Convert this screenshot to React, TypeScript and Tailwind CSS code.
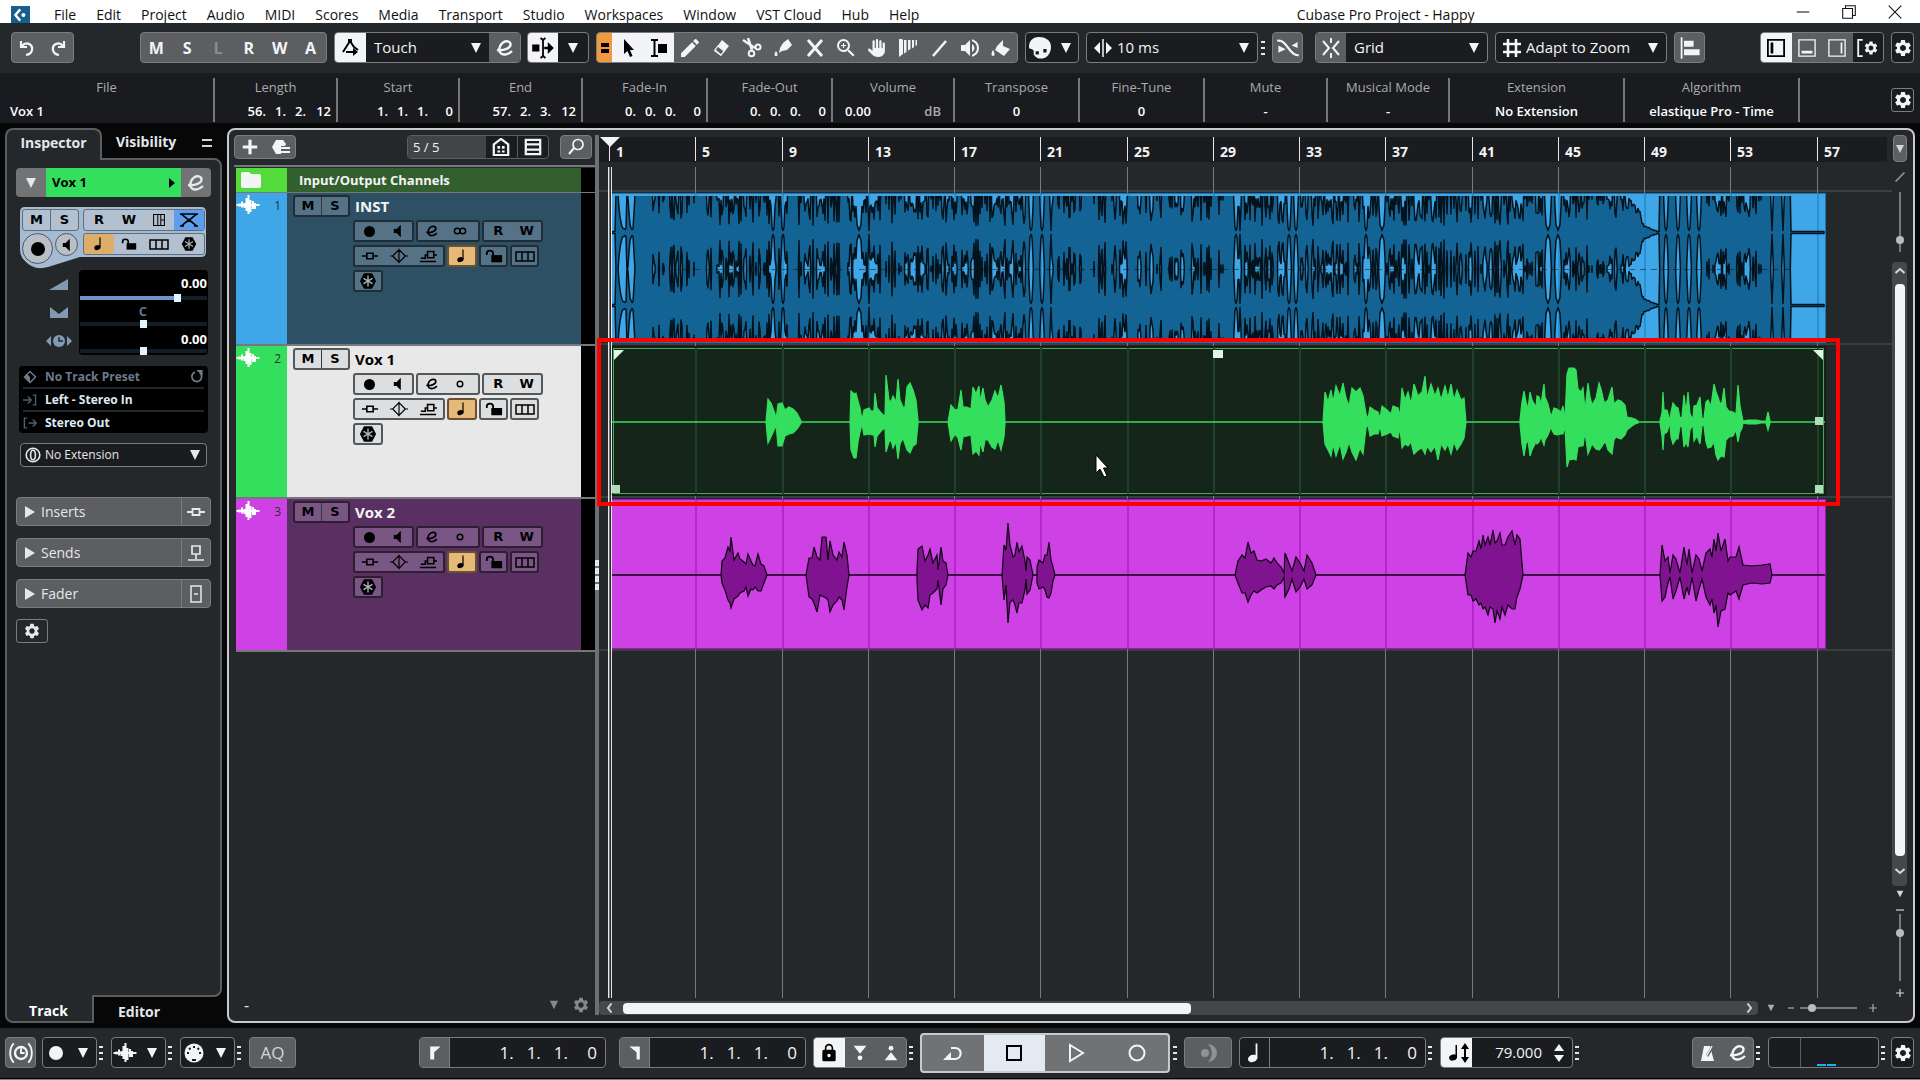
import type { ReactNode } from "react";
import clsx from "clsx";
import { FaHand } from "react-icons/fa6";
import {
  MdEdit,
  MdFolder,
  MdLock,
  MdSettings,
  MdVolumeUp,
  MdZoomIn,
} from "react-icons/md";

/* ---------- icons ---------- */

type IconProps = { className?: string };

const Svg = ({
  children,
  className = "size-5",
  box = "0 0 20 20",
  fill = "none",
}: {
  children: ReactNode;
  className?: string;
  box?: string;
  fill?: string;
}) => (
  <svg viewBox={box} className={clsx("shrink-0", className)} fill={fill} stroke={fill === "none" ? "currentColor" : "none"} strokeWidth="2" aria-hidden="true">
    {children}
  </svg>
);

const Triangle = ({ className = "h-3 w-2.5" }: IconProps) => (
  <Svg box="0 0 10 12" fill="currentColor" className={className}>
    <path d="M0 1h10L5 11z" />
  </Svg>
);

const EditIcon = ({ className = "size-5" }: IconProps) => (
  <Svg className={className}>
    <path d="M2 12C9 13 16 10 15.500 6c-.4-3-4.500-3.500-7.500-1.500C5 6.500 3 12 5.500 15c2.500 2.800 8 1.500 11.500-2" strokeWidth="2.400" />
  </Svg>
);

const WaveIcon = ({ className = "size-6" }: IconProps) => (
  <Svg box="0 0 24 20" className={className}>
    <path d="M.5 10h23M3.500 8.500v3M6 6.500v6M8.500 8v5M10.500 3v13M12.500 0v19M14.500 5v12M17 6v8M19 8v6M21 9v2" />
  </Svg>
);

const NoteIcon = ({ className = "size-5" }: IconProps) => (
  <Svg className={className} fill="currentColor">
    <ellipse cx="8" cy="14.500" rx="4" ry="3" transform="rotate(-20 8 14.500)" />
    <path d="M10.500 2H12v12.500h-1.500z" />
  </Svg>
);

const SpeakerIcon = ({ className = "size-4" }: IconProps) => (
  <Svg className={className} fill="currentColor">
    <path d="M4 7h4l6-6v18l-6-6H4z" />
  </Svg>
);

const UnlockIcon = ({ className = "size-5" }: IconProps) => (
  <Svg className={className}>
    <path d="M2 9V7c0-4 7-4 7 0v3" strokeWidth="2" />
    <path d="M7 9h12v8H7z" fill="currentColor" stroke="none" />
  </Svg>
);

const LanesIcon = ({ className = "size-5" }: IconProps) => (
  <Svg className={className}>
    <path d="M1 6h18v9H1zM7 6v9M13 6v9" strokeWidth="1.500" />
  </Svg>
);

const FreezeIcon = ({ className = "size-5" }: IconProps) => (
  <Svg className={className}>
    <path d="M5.500 1.500h9L19 10l-4.500 8.500h-9L1 10z" fill="currentColor" stroke="none" />
    <path d="M10 4v12M5 7l10 6M15 7L5 13" stroke="#aeb5bb" strokeWidth="1.500" />
  </Svg>
);

const InsertIcon = ({ className = "size-5" }: IconProps) => (
  <Svg className={className}>
    <path d="M1 10h5M14 10h5M6.500 7h7v6h-7z" strokeWidth="1.800" />
  </Svg>
);

const EqIcon = ({ className = "size-5" }: IconProps) => (
  <Svg className={className}>
    <path d="M0 10h3l7-7 7 7-7 7-7-7M17 10h3M10 2v16" strokeWidth="1.300" />
  </Svg>
);

const SendIcon = ({ className = "size-5" }: IconProps) => (
  <Svg className={className}>
    <path d="M1 16h18M2 12.500h5V9h2M9.500 5h7v7h-7zM16 9h4" strokeWidth="1.700" />
  </Svg>
);

const Gear = ({ className = "size-5" }: IconProps) => <MdSettings className={clsx("shrink-0", className)} />;

const Dots = ({ className }: IconProps) => (
  <span className={clsx("flex w-1 shrink-0 flex-col gap-1", className)} aria-hidden="true">
    <i className="h-0.5 bg-gray-200" />
    <i className="h-0.5 bg-gray-200" />
    <i className="h-0.5 bg-gray-200" />
  </span>
);

/* ---------- small controls ---------- */

const Cell = ({ label, children, className }: { label: string; children?: ReactNode; className?: string }) => (
  <button type="button" aria-label={label} className={clsx("flex h-full min-w-0 flex-1 items-center justify-center", className)}>
    {children}
  </button>
);

const Group = ({ children, className }: { children: ReactNode; className?: string }) => (
  <div className={clsx("flex h-[31px] shrink-0 items-center overflow-hidden rounded-[4px] border border-[#7a7c7f]", className)}>
    {children}
  </div>
);

const Picker = ({ label, value, className }: { label: string; value: string; className?: string }) => (
  <label className={clsx("flex h-full min-w-0 flex-1 items-center", className)}>
    <select aria-label={label} defaultValue={value} className="min-w-0 flex-1 appearance-none bg-transparent outline-none">
      <option>{value}</option>
    </select>
    <Triangle className="pointer-events-none h-3 w-2.5" />
  </label>
);

const Position = ({ parts, className }: { parts: string[]; className?: string }) => (
  <span className={clsx("flex justify-end", className)}>
    {parts.map((p, i) => (
      <span key={i} className={i === parts.length - 1 ? "w-4 text-right" : undefined}>
        {p}
      </span>
    ))}
  </span>
);

/* ---------- header bars ---------- */

const menus = ["File", "Edit", "Project", "Audio", "MIDI", "Scores", "Media", "Transport", "Studio", "Workspaces", "Window", "VST Cloud", "Hub", "Help"];

const MenuBar = () => (
  <header className="flex h-[23px] shrink-0 items-center bg-white pl-[11px] pt-1.5 text-[14px] leading-[17px] text-[#111]">
    <span className="flex h-[17px] w-[19px] items-center justify-center bg-[#17608c] text-white">
      <Svg className="size-4">
        <path d="M9 3l-6 7 6 7" strokeWidth="3" />
        <circle cx="13" cy="10" r="2.500" fill="currentColor" stroke="none" />
      </Svg>
    </span>
    <nav className="ml-6 flex gap-5">
      {menus.map((m) => (
        <button key={m} type="button">
          {m}
        </button>
      ))}
    </nav>
    <h1 className="flex-1 pl-14 text-center">Cubase Pro Project - Happy</h1>
    <div className="mb-1.5 mr-[18px] flex gap-8">
      <button type="button" aria-label="Minimize">
        <Svg className="size-3.5"><path d="M1 10h18" strokeWidth="1.500" /></Svg>
      </button>
      <button type="button" aria-label="Restore">
        <Svg className="size-3.5"><path d="M1 5h14v14H1zM5 5V1h14v14h-4" strokeWidth="1.500" /></Svg>
      </button>
      <button type="button" aria-label="Close">
        <Svg className="size-3.5"><path d="M1 1l18 18M19 1L1 19" strokeWidth="1.500" /></Svg>
      </button>
    </div>
  </header>
);

const tools: [string, ReactNode][] = [
  ["Draw", <MdEdit className="size-6" />],
  ["Erase", <Svg className="size-5"><path d="M11 2l7 6-8 10-7-5z" fill="currentColor" stroke="none" /><path d="M4 12l6 5 3-4-6-5z" fill="#5d5e61" strokeWidth="1.200" /></Svg>],
  ["Split", <Svg className="size-5"><path d="M1 2l12 8M6 0l4 12" strokeWidth="2.500" /><circle cx="16" cy="9" r="2.500" /><circle cx="9.500" cy="15.500" r="2.800" /></Svg>],
  ["Glue", <Svg className="size-5"><path d="M10 5l5-4 4 6-5 5-5 1-3 2 1-5z" fill="currentColor" stroke="none" /><path d="M3 13c2 3 2 5 0 5s-2-2 0-5z" fill="currentColor" stroke="none" /></Svg>],
  ["Mute", <Svg className="size-5"><path d="M3 2l14 16M17 2L3 18" strokeWidth="3" /></Svg>],
  ["Zoom", <MdZoomIn className="size-6" />],
  ["Hand", <FaHand className="size-[18px]" />],
  ["Warp", <Svg className="size-5"><path d="M1 1h3l1 1v14l-4 3zM6 2h2.500v12L6 15.500zM10 2h2.500v9L10 12.500zM14 2h2v7l-2 1.500zM17.500 2H19v5l-1.500 1z" fill="currentColor" stroke="none" /></Svg>],
  ["Line", <Svg className="size-5"><path d="M4 18L17 3" strokeWidth="2.500" /></Svg>],
  ["Play", <MdVolumeUp className="size-6" />],
  ["Color", <Svg className="size-5"><path d="M6 8l6-6v6l7 3-6 7-9-6z" fill="currentColor" stroke="none" /><path d="M2 12c2 3 2 6 0 6s-2-3 0-6z" fill="currentColor" stroke="none" /></Svg>],
];

const Toolbar = () => (
  <div className="flex h-[50px] shrink-0 items-center gap-[7px] bg-[#24282b] pb-px pl-[11px] pr-1.5 text-[15px] text-gray-100">
    <Group className="mr-[59px] w-[63px] bg-[#5d5e61]">
      <Cell label="Undo"><Svg><path d="M4 3v6h6M5 8c4-5 11-2 10 4-.5 3-3 4.500-6 5" strokeWidth="2.200" /></Svg></Cell>
      <Cell label="Redo"><Svg><path d="M16 3v6h-6M15 8C11 3 4 6 5 12c.5 3 3 4.500 6 5" strokeWidth="2.200" /></Svg></Cell>
    </Group>
    <Group className="w-[187px] bg-[#5d5e61] text-[16px] font-bold">
      {["M", "S", "L", "R", "W", "A"].map((l) => (
        <Cell key={l} label={l} className={l === "L" ? "text-[#8b8c8e]" : undefined}>{l}</Cell>
      ))}
    </Group>
    <Group className="w-[187px] bg-[#1b1c20]">
      <Cell label="Automation follows events" className="max-w-[31px] bg-gray-100 text-black">
        <Svg><path d="M2 14L9 3l4 6 4 3M5 14h8" /><path d="M12 10l5 4-5 4z" fill="currentColor" stroke="none" /><path d="M7 1h4v4H7z" fill="currentColor" stroke="none" /></Svg>
      </Cell>
      <Picker label="Automation mode" value="Touch" className="px-2" />
      <Cell label="Open automation panel" className="max-w-[31px] bg-[#5d5e61]"><EditIcon /></Cell>
    </Group>
    <Group className="-ml-px w-[62px] bg-[#1b1c20]">
      <Cell label="Auto-scroll" className="bg-gray-100 text-black">
        <Svg className="size-6"><path d="M10 2v16M8 1.500l2 2 2-2M8 18.500l2-2 2 2" strokeWidth="1.500" /><path d="M1 7h6v6H1zM11 9h3V5l5 5-5 5v-4h-3z" fill="currentColor" stroke="none" /></Svg>
      </Cell>
      <Cell label="Auto-scroll settings"><Triangle /></Cell>
    </Group>
    <Group className="w-[422px] bg-[#5d5e61]">
      <button type="button" aria-label="Show tool buttons" className="flex h-full w-[15px] flex-col items-center justify-center gap-0.5 bg-[#f2993f]">
        <i className="h-1 w-2 bg-black" />
        <i className="h-1 w-2 bg-black" />
      </button>
      <Cell label="Object selection" className="bg-gray-100 text-black">
        <Svg fill="currentColor"><path d="M6 1v15l3.500-3 2.500 6 2.500-1-2.500-6h4z" /></Svg>
      </Cell>
      <Cell label="Range selection" className="bg-gray-100 text-black">
        <Svg><path d="M2 2h7M5.500 2v16M2 18h7" /><path d="M9 6h9v9H9z" fill="currentColor" stroke="none" /></Svg>
      </Cell>
      {tools.map(([name, icon]) => (
        <Cell key={name} label={name}>{icon}</Cell>
      ))}
    </Group>
    <Group className="w-[54px] bg-[#1b1c20]">
      <Cell label="Color menu">
        <Svg className="size-[22px]"><path d="M9 0C3 0 0 4 0 9c0 3 3 1 4 3s-1 3 2 6c2 2 5 2 8 1 4-1.500 6-6 6-10 0-6-5-9-11-9z" fill="currentColor" stroke="none" /><path d="M6 13h3v3H6zM13 11h3v3h-3z" fill="#1b1c20" stroke="none" /></Svg>
      </Cell>
      <Cell label="Color list" className="max-w-6"><Triangle /></Cell>
    </Group>
    <Group className="w-[172px] bg-[#1b1c20] pl-1.5">
      <Svg><path d="M10 1v18" strokeWidth="1.500" /><path d="M7 4v12l-6-6zM13 4v12l6-6z" fill="currentColor" stroke="none" /></Svg>
      <Picker label="Nudge" value="10 ms" className="pl-1 pr-2" />
    </Group>
    <Dots className="-ml-1" />
    <Group className="w-[31px] bg-[#5d5e61]">
      <Cell label="Snap to zero crossing"><Svg className="size-6"><path d="M1 4c8-2 10 13 18 12" strokeWidth="1.800" /><path d="M2 8l6 3-6 3zM18 5v5l-5-2z" fill="currentColor" stroke="none" /></Svg></Cell>
    </Group>
    <Group className="ml-[5px] w-[173px] bg-[#1b1c20]">
      <Cell label="Snap" className="max-w-[30px] bg-[#5d5e61]">
        <Svg><path d="M10 0v5M10 15v5M2 3l6 7-6 7M18 3l-6 7 6 7" /></Svg>
      </Cell>
      <Picker label="Snap type" value="Grid" className="px-2" />
    </Group>
    <Group className="w-[172px] bg-[#1b1c20] pl-1.5">
      <Svg><path d="M6 1v18M14 1v18M1 6h18M1 14h18" strokeWidth="2.500" /></Svg>
      <Picker label="Grid type" value="Adapt to Zoom" className="pl-1 pr-2" />
    </Group>
    <Group className="w-[31px] bg-[#5d5e61]">
      <Cell label="Quantize"><Svg className="size-6"><path d="M3 1v18" strokeWidth="1.500" /><path d="M5 4h8v5H5zM5 11h13v5H5z" fill="currentColor" stroke="none" /></Svg></Cell>
    </Group>
    <Group className="ml-auto w-[124px] bg-[#5d5e61]">
      <Cell label="Left zone" className="bg-gray-100 text-black"><Svg className="h-[18px] w-5"><path d="M1 1h18v18H1z" /><path d="M4 4h3v12H4z" fill="currentColor" stroke="none" /></Svg></Cell>
      <Cell label="Lower zone"><Svg className="h-[18px] w-5"><path d="M1 1h18v18H1z" strokeWidth="1.500" /><path d="M4 13h12v3H4z" fill="currentColor" stroke="none" /></Svg></Cell>
      <Cell label="Right zone"><Svg className="h-[18px] w-5"><path d="M1 1h18v18H1z" strokeWidth="1.500" /><path d="M14 4h2v12h-2z" fill="currentColor" stroke="none" /></Svg></Cell>
      <Cell label="Window layout" className="bg-[#1b1c20]"><Svg className="h-[18px] w-1.5" box="0 0 6 20"><path d="M6 1H1v18h5" /></Svg><Gear className="size-4" /></Cell>
    </Group>
    <Group className="w-[23px] bg-[#1b1c20]"><Cell label="Set up toolbar"><Gear /></Cell></Group>
  </div>
);

const InfoCell = ({ label, width, children }: { label: string; width: string; children: ReactNode }) => (
  <div className={clsx("flex h-11 shrink-0 flex-col border-r-2 border-[#75777a] text-center", width)}>
    <span className="text-[#a9abad]">{label}</span>
    <div className="mt-1.5 px-[5px] font-semibold text-white">{children}</div>
  </div>
);

const InfoLine = () => (
  <div className="flex h-[50px] shrink-0 items-end bg-[#191b1e] pb-px pr-1.5 text-[13px] leading-[18px]">
    <InfoCell label="File" width="w-[215px]"><p className="pl-[5px] text-left">Vox 1</p></InfoCell>
    <InfoCell label="Length" width="w-[123px]"><Position parts={["56.", "1.", "2.", "12"]} className="gap-[9px]" /></InfoCell>
    <InfoCell label="Start" width="w-[122px]"><Position parts={["1.", "1.", "1.", "0"]} className="gap-[9px]" /></InfoCell>
    <InfoCell label="End" width="w-[123px]"><Position parts={["57.", "2.", "3.", "12"]} className="gap-[9px]" /></InfoCell>
    <InfoCell label="Fade-In" width="w-[125px]"><Position parts={["0.", "0.", "0.", "0"]} className="gap-[9px]" /></InfoCell>
    <InfoCell label="Fade-Out" width="w-[125px]"><Position parts={["0.", "0.", "0.", "0"]} className="gap-[9px]" /></InfoCell>
    <InfoCell label="Volume" width="w-[122px]">
      <p className="flex justify-between px-[7px]">0.00 <span className="text-[#a9abad]">dB</span></p>
    </InfoCell>
    <InfoCell label="Transpose" width="w-[125px]">0</InfoCell>
    <InfoCell label="Fine-Tune" width="w-[125px]">0</InfoCell>
    <InfoCell label="Mute" width="w-[123px]">-</InfoCell>
    <InfoCell label="Musical Mode" width="w-[122px]">-</InfoCell>
    <InfoCell label="Extension" width="w-[175px]">No Extension</InfoCell>
    <InfoCell label="Algorithm" width="w-[175px]">elastique Pro - Time</InfoCell>
    <button type="button" aria-label="Set up info line" className="mb-2.5 ml-auto flex h-6 w-[23px] items-center justify-center rounded-[3px] border border-[#7a7c7f] text-gray-100">
      <Gear />
    </button>
  </div>
);

/* ---------- inspector ---------- */

const range =
  "block h-1 w-full appearance-none bg-[#141d26] outline-none [&::-webkit-slider-thumb]:h-2 [&::-webkit-slider-thumb]:w-[7px] [&::-webkit-slider-thumb]:appearance-none [&::-webkit-slider-thumb]:bg-[#dff5ff]";

const Fold = ({ name, children }: { name: string; children: ReactNode }) => (
  <button type="button" className="flex h-[29px] w-full items-center rounded-[4px] border border-[#7a7c7f] bg-[#5d5e61] text-[14px] text-gray-200">
    <Svg box="0 0 10 12" fill="currentColor" className="ml-2 h-3 w-2.5"><path d="M0 0l10 6-10 6z" /></Svg>
    <span className="ml-1.5 flex-1 text-left">{name}</span>
    <span className="flex h-full w-[29px] items-center justify-center border-l border-[#7a7c7f]">{children}</span>
  </button>
);

const steel = "rounded-[3px] border border-[#5f6e7e] bg-[#b3c0d0]";

const letters = "font-['DejaVu_Sans',sans-serif] text-[13px] font-bold";

const Inspector = () => (
  <aside className="flex w-[217px] shrink-0 flex-col text-[14px] font-bold text-gray-200">
    <div className="flex h-[30px] items-stretch">
      <button type="button" className="relative -mb-0.5 w-[97px] rounded-t-lg border-2 border-b-0 border-[#5b5e61] bg-[#24282b] pb-1.5">Inspector</button>
      <button type="button" className="ml-3.5 pb-1">Visibility</button>
      <button type="button" aria-label="Inspector setup" className="ml-auto mr-2.5 flex flex-col justify-center gap-1">
        <i className="h-0.5 w-2.5 bg-gray-300" />
        <i className="h-0.5 w-2.5 bg-gray-300" />
      </button>
    </div>

    <div className="flex-1 rounded-r-lg border-2 border-[#5b5e61] bg-[#24282b] px-[9px] pt-2">
      <div className="flex h-[29px] overflow-hidden rounded-[4px] bg-[#727375]">
        <Cell label="Collapse" className="max-w-[30px]"><Triangle className="h-3 w-2.5" /></Cell>
        <button type="button" className="flex flex-1 items-center justify-between bg-[#35df5e] px-1.5 text-[13px] text-black">
          Vox 1
          <Svg box="0 0 6 10" fill="currentColor" className="h-2.5 w-1.5"><path d="M0 0l6 5-6 5z" /></Svg>
        </button>
        <Cell label="Edit channel" className="max-w-[30px]"><EditIcon /></Cell>
      </div>

      <div className="relative mx-1 mt-2.5 text-black">
        <svg viewBox="0 0 186 62" className="absolute inset-0 h-[62px] w-[186px]" aria-hidden="true">
          <path d="M5 0h176q5 0 5 5v40q0 5-5 5H60L28 60Q14 64 5 54 0 50 0 42V5q0-5 5-5z" fill="#a5bbd4" />
        </svg>
        <div className={clsx("relative grid h-[62px] grid-cols-[57px_1fr] content-start gap-x-1 gap-y-0.5 p-0.5", letters)}>
          <div className={clsx("flex h-[22px]", steel)}>
            <Cell label="Mute" className="border-r border-[#5f6e7e]">M</Cell>
            <Cell label="Solo">S</Cell>
          </div>
          <div className={clsx("flex h-[22px]", steel)}>
            <Cell label="Read automation">R</Cell>
            <Cell label="Write automation">W</Cell>
            <Cell label="Lanes"><Svg className="size-3"><path d="M1 1h18v18H1zM8 1v18M13 1v18M13 10h6" strokeWidth="1.700" /></Svg></Cell>
            <Cell label="Auto fades" className="bg-[#5f9ceb]"><Svg className="size-5"><path d="M1 4h18M1 4c3 0 4 3 9 6s7 6 8 6M19 4c-3 0-4 3-9 6s-7 6-8 6M1 16h4M15 16h4" strokeWidth="1.600" /></Svg></Cell>
          </div>
          <div className="flex items-start gap-0.5">
            <button type="button" aria-label="Record enable" className="flex size-[31px] shrink-0 items-center justify-center rounded-full border border-[#4c5866] bg-[#b9bfc6]">
              <i className="size-3.5 rounded-full bg-black" />
            </button>
            <button type="button" aria-label="Monitor" className="flex size-[23px] shrink-0 items-center justify-center rounded-full border border-[#4c5866] bg-[#b9bfc6]">
              <SpeakerIcon className="size-3.5" />
            </button>
          </div>
          <div className={clsx("flex h-[22px]", steel)}>
            <Cell label="Musical timebase" className="rounded bg-[#dcae68]"><NoteIcon className="size-4" /></Cell>
            <Cell label="Lock"><UnlockIcon className="size-4" /></Cell>
            <Cell label="Lane display"><LanesIcon /></Cell>
            <Cell label="Freeze"><FreezeIcon className="size-4" /></Cell>
          </div>
        </div>
      </div>

      <div className="mx-[3px] mt-px flex">
        <div className="flex w-[60px] flex-col items-center gap-4 pl-5 pt-2 text-[#8299b3]">
          <Svg box="0 0 20 12" fill="currentColor" className="h-3 w-5"><path d="M0 12L19 1v11z" /></Svg>
          <Svg box="0 0 20 12" fill="currentColor" className="h-3 w-5"><path d="M1 1l9 7 9-7v11H1z" /></Svg>
          <Svg box="0 0 28 14" className="h-3.5 w-7"><path d="M6 2v10L1 7zM22 2v10l5-5z" fill="currentColor" stroke="none" /><circle cx="14" cy="7" r="6" fill="currentColor" stroke="none" /><path d="M14 3v4h4" stroke="#24282b" strokeWidth="1.500" /></Svg>
        </div>
        <div className="flex-1 rounded-sm bg-black px-px pb-0.5 text-right text-[13px] leading-[18px] text-white">
          <p className="py-1">0.00</p>
          <input type="range" aria-label="Volume" defaultValue={78} className={clsx(range, "bg-linear-to-r from-[#6f95c8] from-75% to-[#141d26] to-75%")} />
          <p className="py-0.5 pr-[60px] text-[#5a7594]">C</p>
          <input type="range" aria-label="Pan" className={range} />
          <p className="pb-px pt-1">0.00</p>
          <input type="range" aria-label="Delay" className={range} />
        </div>
      </div>

      <div className="mx-[3px] mt-[11px] divide-y-2 divide-[#20262b] rounded-sm bg-black px-1 text-[12px] leading-[21px] text-[#dfeaf7]">
        <p className="flex items-center gap-2 text-[#6d7b8c]">
          <Svg className="size-3.5"><path d="M10 2l8 8-8 8-8-8z" /><path d="M2 10l8 8v-8L6 6z" fill="currentColor" stroke="none" /></Svg>
          <span className="flex-1">No Track Preset</span>
          <Svg className="size-3.5"><path d="M14 4a7 7 0 1 1-7-1" strokeWidth="2.500" /><path d="M9 0h9v8z" fill="currentColor" stroke="none" /></Svg>
        </p>
        <p className="flex items-center gap-2">
          <Svg className="size-3.5 text-[#4c6070]"><path d="M0 10h10M7 5l5 5-5 5M14 3h4v14h-4" /></Svg>
          Left - Stereo In
        </p>
        <p className="flex items-center gap-2">
          <Svg className="size-3.5 text-[#4c6070]"><path d="M6 3H2v14h4M8 10h10M14 5l5 5-5 5" /></Svg>
          Stereo Out
        </p>
      </div>

      <div className="mx-1 mt-2.5 flex h-6 items-center rounded-sm border border-[#7a7c7f] bg-[#1b1c20] pl-1 text-[12px] font-normal">
        <Svg className="size-4"><circle cx="10" cy="10" r="8.500" /><ellipse cx="10" cy="10" rx="3" ry="6" /></Svg>
        <Picker label="Extension" value="No Extension" className="pl-1 pr-1.5" />
      </div>

      <div className="mt-[30px] flex flex-col gap-3 font-normal">
        <Fold name="Inserts"><InsertIcon /></Fold>
        <Fold name="Sends"><Svg className="size-5"><path d="M6 3h8v8H6zM10 11v5M2 17h16" strokeWidth="1.700" /></Svg></Fold>
        <Fold name="Fader"><Svg className="size-5"><path d="M5 2h10v16H5zM8 10h4" strokeWidth="1.500" /></Svg></Fold>
      </div>
      <button type="button" aria-label="Set up inspector" className="mt-[11px] flex h-6 w-8 items-center justify-center rounded-[3px] border border-[#7a7c7f]">
        <Gear className="size-[18px]" />
      </button>
    </div>

    <div className="flex h-[26px] items-stretch">
      <button type="button" className="relative -mt-0.5 w-[89px] rounded-bl-lg border-2 border-t-0 border-[#5b5e61] bg-[#24282b] pr-0.5 pt-1 text-white">Track</button>
      <button type="button" className="ml-6 pt-0.5">Editor</button>
    </div>
  </aside>
);

/* ---------- track list ---------- */

type Skin = { color: string; body: string; name: string; box: string };

const tracks: { id: number; name: string; stereo?: boolean; skin: Skin }[] = [
  { id: 1, name: "INST", stereo: true, skin: { color: "bg-[#3fa7e8]", body: "bg-[#2e5064]", name: "text-gray-100", box: "border-[#202d36] bg-[#557286]" } },
  { id: 2, name: "Vox 1", skin: { color: "bg-[#35df5e]", body: "bg-[#e8e8e8]", name: "text-black", box: "border-[#55585b] bg-[#dcdee0]" } },
  { id: 3, name: "Vox 2", skin: { color: "bg-[#ce42e5]", body: "bg-[#5a3063]", name: "text-gray-100", box: "border-[#2f1d34] bg-[#7a5684]" } },
];

const TrackRow = ({ id, name, stereo, skin }: (typeof tracks)[number]) => {
  const box = clsx("flex h-[22px] items-center overflow-hidden rounded-[3px] border-2", skin.box);
  return (
    <li className="flex h-[153px] border-b-2 border-[#75777a] bg-black pr-3.5">
      <div className={clsx("flex w-[51px] justify-between pr-1.5 pt-0.5", skin.color)}>
        <WaveIcon className="h-5 w-6 text-white" />
        <span className="pt-0.5 text-[12px] text-[#26323a]">{id}</span>
      </div>
      <div className={clsx("flex-1 pl-1.5 pt-0.5 text-black", letters, skin.body)}>
        <div className="flex items-center gap-[5px]">
          <div className={clsx(box, "w-[57px]")}>
            <Cell label={`Mute ${name}`} className="border-r border-[#33383c]">M</Cell>
            <Cell label={`Solo ${name}`}>S</Cell>
          </div>
          <span className={clsx("font-['Open_Sans',sans-serif] text-[15px] leading-[22px]", skin.name)}>{name}</span>
        </div>
        <div className="ml-[60px] mt-[3px] flex gap-0.5">
          <div className={clsx(box, "w-[61px]")}>
            <Cell label="Record"><i className="size-[11px] rounded-full bg-black" /></Cell>
            <Cell label="Monitor"><SpeakerIcon className="size-3.5" /></Cell>
          </div>
          <div className={clsx(box, "w-16")}>
            <Cell label="Edit"><EditIcon className="size-3.5" /></Cell>
            <Cell label="Channel configuration" className="pr-1">
              {stereo ? (
                <Svg className="size-3.5"><circle cx="6" cy="10" r="4" /><circle cx="14" cy="10" r="4" /></Svg>
              ) : (
                <Svg className="size-3.5"><circle cx="10" cy="10" r="4" /></Svg>
              )}
            </Cell>
          </div>
          <div className={clsx(box, "w-[61px]")}>
            <Cell label="Read">R</Cell>
            <Cell label="Write">W</Cell>
          </div>
        </div>
        <div className="ml-[60px] mt-[3px] flex gap-0.5">
          <div className={clsx(box, "w-[92px]")}>
            <Cell label="Inserts"><InsertIcon className="size-[18px]" /></Cell>
            <Cell label="EQs"><EqIcon className="size-[18px]" /></Cell>
            <Cell label="Sends"><SendIcon className="size-[18px]" /></Cell>
          </div>
          <div className="flex h-[22px] w-[30px] rounded-[3px] border-2 border-[#6b5130] bg-[#e5b977]">
            <Cell label="Timebase"><NoteIcon className="size-4" /></Cell>
          </div>
          <div className={clsx(box, "w-[29px]")}><Cell label="Lock"><UnlockIcon className="size-[18px]" /></Cell></div>
          <div className={clsx(box, "w-[29px]")}><Cell label="Lanes"><LanesIcon /></Cell></div>
        </div>
        <div className={clsx(box, "ml-[60px] mt-[3px] w-[30px]")}><Cell label="Freeze"><FreezeIcon className="size-[18px]" /></Cell></div>
      </div>
    </li>
  );
};

const TrackList = () => (
  <section className="flex w-[366px] shrink-0 flex-col pl-[5px] pt-[5px] text-gray-100">
    <div className="flex h-6 items-stretch pr-[3px]">
      <div className="flex w-[62px] rounded-sm border border-[#7a7c7f] bg-[#5d5e61]">
        <Cell label="Add track"><Svg className="size-4"><path d="M10 1v18M1 10h18" strokeWidth="4" /></Svg></Cell>
        <Cell label="Track presets"><Svg><path d="M6 3h7l3 4-1 2h-4v8H6l-4-7z" fill="currentColor" stroke="none" /><path d="M11 11h9M11 15h9" /></Svg></Cell>
      </div>
      <div className="ml-[111px] flex w-[142px] rounded-sm border border-[#5b5e61] bg-[#1b1c20] text-[13px]">
        <span className="w-[78px] bg-[#424548] pl-[5px] leading-[22px]">5 / 5</span>
        <Cell label="Filter by agents"><Svg className="size-[18px]"><path d="M2 7l8-6 8 6v12H2z" strokeWidth="2.500" /><path d="M6 9h3v3H6zM11 9h3v3h-3zM6 14h3v2H6zM11 14h3v2h-3z" fill="currentColor" stroke="none" /></Svg></Cell>
        <Cell label="Track types" className="border-l border-[#5b5e61]"><Svg className="size-[18px]"><path d="M2 2h16v16H2zM2 7h16M2 13h16" strokeWidth="2.500" /></Svg></Cell>
      </div>
      <div className="ml-auto flex w-8 rounded-sm border border-[#7a7c7f] bg-[#5d5e61]">
        <Cell label="Find tracks"><Svg><circle cx="12" cy="7.500" r="5" strokeWidth="1.700" /><path d="M8 11l-5 6" /></Svg></Cell>
      </div>
    </div>
    <div className="mt-1.5 border-t-2 border-[#75777a] pl-0.5">
      <div className="mt-px flex h-[25px] border-b border-[#75777a] bg-black pr-3.5 text-[13px] font-bold">
        <span className="w-[51px] bg-[#54dc3c] pl-[3px]"><MdFolder className="size-6" /></span>
        <span className="flex-1 bg-[#335f2f] pl-3 leading-6">Input/Output Channels</span>
      </div>
      <ul>
        {tracks.map((t) => (
          <TrackRow key={t.id} {...t} />
        ))}
      </ul>
    </div>
    <div className="mt-auto flex h-8 items-center gap-3 pl-2.5 pr-[5px] text-[#85878a]">
      <span className="flex-1 text-gray-200">-</span>
      <Triangle className="h-2.5 w-3" />
      <Gear className="size-[18px]" />
    </div>
  </section>
);

/* ---------- arrangement ---------- */

const CLIP_WIDTH = 1216;

// [x, level above the zero line, level below the zero line]
type Peak = [number, number, number];

const vox1: Peak[][] = [
  [[154, 0, 0], [156, 23, 21], [159, 19, 15], [163, 8, 6], [164, 2, 2], [166, 18, 24], [170, 19, 24], [173, 12, 14], [177, 15, 12], [181, 13, 11], [185, 9, 7], [189, 1, 1]],
  [[238, 0, 0], [239, 31, 28], [242, 28, 36], [244, 29, 36], [246, 21, 20], [248, 14, 10], [250, 2, 2], [252, 12, 13], [257, 14, 12], [260, 10, 13], [262, 12, 13], [263, 29, 25], [265, 14, 14], [270, 8, 8], [273, 6, 6], [274, 47, 30], [277, 22, 20], [279, 20, 18], [281, 26, 26], [284, 20, 20], [286, 43, 37], [288, 22, 22], [291, 15, 16], [293, 15, 22], [295, 35, 28], [298, 39, 31], [301, 32, 24], [304, 22, 22], [306, 2, 2]],
  [[336, 0, 0], [339, 17, 19], [343, 12, 12], [346, 13, 16], [349, 32, 28], [351, 15, 15], [355, 15, 14], [359, 13, 13], [361, 35, 32], [364, 28, 29], [367, 36, 33], [368, 20, 20], [371, 34, 30], [373, 22, 18], [376, 15, 18], [380, 22, 25], [383, 31, 27], [386, 24, 18], [389, 37, 28], [392, 20, 15], [393, 1, 1]],
  [[711, 0, 0], [713, 30, 22], [716, 20, 28], [719, 32, 34], [721, 20, 22], [724, 36, 34], [728, 26, 22], [731, 39, 37], [734, 24, 30], [737, 16, 20], [740, 34, 30], [744, 30, 38], [748, 34, 26], [751, 26, 32], [754, 8, 6], [756, 3, 3], [758, 15, 14], [762, 12, 12], [766, 10, 12], [768, 4, 4], [770, 16, 14], [775, 12, 12], [779, 8, 10], [781, 16, 14], [786, 14, 16], [788, 6, 6], [790, 34, 26], [793, 22, 22], [796, 30, 24], [799, 18, 20], [802, 38, 32], [806, 26, 28], [810, 30, 26], [813, 46, 32], [815, 24, 24], [819, 38, 30], [823, 26, 24], [826, 34, 38], [829, 22, 22], [833, 36, 28], [836, 24, 22], [839, 38, 32], [842, 22, 20], [845, 32, 28], [849, 22, 22], [852, 24, 16], [854, 0, 0]],
  [[908, 2, 2], [910, 20, 22], [912, 31, 34], [914, 20, 22], [916, 13, 18], [918, 30, 34], [920, 22, 28], [924, 15, 20], [925, 26, 22], [927, 25, 20], [929, 18, 15], [932, 38, 23], [933, 25, 18], [936, 18, 13], [939, 5, 5], [940, 8, 8], [942, 14, 12], [945, 13, 13], [949, 10, 12], [951, 16, 12], [953, 3, 4], [955, 48, 45], [957, 54, 38], [962, 54, 37], [964, 52, 38], [966, 33, 25], [969, 30, 24], [971, 34, 24], [973, 12, 10], [976, 39, 32], [978, 25, 27], [980, 17, 22], [984, 24, 27], [987, 39, 28], [989, 33, 26], [992, 20, 21], [994, 20, 21], [996, 22, 28], [1000, 35, 32], [1002, 18, 18], [1004, 20, 15], [1006, 22, 16], [1009, 21, 17], [1013, 17, 13], [1015, 5, 8], [1020, 4, 4], [1023, 3, 2], [1026, 1, 1]],
  [[1048, 1, 1], [1050, 9, 14], [1051, 30, 28], [1052, 12, 12], [1055, 12, 10], [1058, 1, 1], [1059, 10, 15], [1061, 19, 22], [1064, 15, 17], [1066, 14, 17], [1068, 4, 4], [1070, 5, 5], [1072, 27, 25], [1074, 10, 20], [1076, 30, 25], [1078, 8, 8], [1081, 3, 3], [1082, 16, 19], [1085, 17, 14], [1088, 25, 22], [1090, 3, 3], [1092, 4, 4], [1094, 20, 20], [1096, 22, 26], [1099, 16, 25], [1102, 38, 20], [1104, 30, 33], [1106, 25, 38], [1108, 18, 35], [1110, 20, 34], [1112, 34, 35], [1114, 15, 18], [1117, 11, 15], [1121, 10, 14], [1124, 8, 8], [1126, 37, 20], [1128, 16, 10], [1130, 6, 6], [1131, 1, 1], [1136, 2, 2], [1145, 2, 2], [1149, 1, 1], [1154, 1, 1], [1156, 10, 8], [1158, 1, 1]],
];

const vox2: Peak[][] = [
  [[109, 0, 0], [110, 14, 8], [113, 17, 15], [116, 28, 25], [118, 24, 28], [119, 38, 33], [122, 15, 24], [126, 22, 21], [128, 16, 18], [132, 13, 16], [134, 11, 12], [136, 21, 21], [139, 14, 14], [141, 10, 15], [143, 9, 12], [146, 21, 16], [149, 11, 16], [152, 9, 8], [155, 0, 0]],
  [[194, 0, 0], [197, 17, 22], [200, 17, 24], [202, 28, 28], [205, 18, 37], [208, 15, 20], [210, 38, 21], [214, 38, 23], [216, 15, 25], [218, 34, 37], [221, 20, 30], [225, 15, 26], [227, 23, 22], [230, 18, 25], [232, 33, 35], [235, 20, 12], [237, 0, 0]],
  [[305, 5, 5], [306, 26, 25], [310, 29, 35], [313, 14, 30], [316, 20, 33], [318, 26, 20], [321, 12, 18], [325, 20, 14], [326, 5, 5], [329, 28, 30], [331, 14, 14], [334, 12, 10], [336, 0, 0]],
  [[390, 0, 0], [392, 30, 25], [394, 25, 10], [396, 52, 48], [398, 30, 27], [401, 18, 25], [403, 20, 30], [405, 33, 38], [407, 23, 28], [410, 29, 28], [413, 14, 15], [414, 4, 4], [415, 18, 19], [418, 15, 15], [421, 0, 0]],
  [[425, 8, 8], [427, 15, 14], [431, 12, 12], [433, 20, 15], [435, 20, 22], [437, 33, 23], [439, 15, 18], [441, 8, 6], [443, 0, 0]],
  [[623, 0, 0], [626, 14, 8], [630, 20, 18], [633, 17, 18], [636, 33, 27], [639, 22, 20], [642, 24, 16], [645, 15, 18], [649, 14, 15], [654, 16, 12], [659, 12, 11], [662, 17, 14], [665, 12, 10], [669, 8, 8], [672, 2, 2], [673, 22, 22], [677, 12, 14], [680, 4, 4], [684, 18, 17], [688, 12, 12], [692, 4, 4], [695, 20, 14], [700, 12, 10], [704, 0, 0]],
  [[853, 0, 0], [856, 22, 20], [859, 18, 20], [861, 24, 26], [864, 24, 24], [867, 34, 30], [869, 26, 28], [871, 40, 34], [873, 30, 32], [876, 38, 40], [878, 30, 32], [881, 45, 34], [883, 32, 48], [885, 34, 36], [888, 42, 44], [890, 30, 32], [893, 30, 40], [896, 38, 30], [900, 44, 34], [903, 30, 34], [905, 40, 22], [908, 36, 14], [911, 0, 0]],
  [[1048, 0, 0], [1050, 30, 26], [1053, 14, 22], [1056, 18, 8], [1058, 2, 2], [1061, 20, 24], [1064, 16, 16], [1068, 2, 2], [1072, 28, 24], [1075, 10, 12], [1077, 26, 20], [1080, 2, 2], [1084, 20, 26], [1087, 16, 14], [1090, 4, 4], [1094, 22, 22], [1098, 26, 30], [1100, 18, 24], [1102, 36, 38], [1104, 24, 30], [1106, 42, 52], [1109, 24, 36], [1113, 36, 34], [1116, 14, 18], [1118, 18, 20], [1124, 18, 16], [1127, 28, 24], [1131, 10, 10], [1140, 9, 8], [1150, 10, 9], [1158, 11, 8], [1160, 0, 0]],
];

const outline = (peaks: Peak[], mid: number) =>
  "M" +
  peaks.map(([x, up]) => `${x} ${mid - up}`).join("L") +
  "L" +
  [...peaks].reverse().map(([x, , down]) => `${x} ${mid + down}`).join("L") +
  "Z";

// Busy stretches of the backing track: [from, to, chance of a dip, deepest dip]
const busy = [
  [24, 50, 0.2, 16], [50, 92, 0.35, 22], [92, 108, 0.5, 26], [108, 156, 0.65, 28], [156, 245, 0.68, 28], [245, 312, 0.62, 26],
  [312, 340, 0.68, 24], [340, 415, 0.68, 28], [440, 470, 0.5, 24], [470, 485, 0.1, 10], [485, 518, 0.6, 26], [525, 542, 0.55, 24],
  [545, 573, 0.55, 22], [580, 612, 0.5, 26], [632, 680, 0.65, 28], [688, 780, 0.65, 28], [780, 932, 0.68, 28], [950, 1018, 0.55, 22],
  [1092, 1105, 0.4, 10], [1105, 1118, 0.6, 18], [1125, 1150, 0.5, 18],
];

// Breaks in the backing track: [centre, half width]
const breaks = [
  [161, 2], [171, 2], [247, 3], [257, 1], [419, 2], [430, 2], [439, 1], [624, 2], [628, 1], [677, 2], [684, 2], [754, 2],
  [770, 3], [936, 3], [946, 3], [1054, 2], [1066, 2], [1077, 2], [1087, 2], [1160, 1], [1171, 1],
];

const intro = [1, 1, 1, 1, 40, 40, 38, 24, 16, 10, 6, 4, 4, 3, 4, 40, 34, 20, 8, 5, 3, 4, 20, 38];
const fadeOut = [37, 26, 24, 34, 32, 26, 28, 27, 20, 24, 21, 15, 9, 6, 6, 5, 5, 4, 3, 3, 2, 2];

const FADE_START = 1012;
const END_OF_AUDIO = 1178;

const backing = (): Peak[] => {
  let seed = 7;
  const rnd = () => (seed = (seed * 16807) % 2147483647) / 2147483647;
  return Array.from({ length: CLIP_WIDTH - 3 }, (_, x): Peak => {
    const part = busy.find(([a, b]) => x >= a && x < b);
    const roll = rnd();
    const depth = rnd();
    let level = 54;
    if (part && roll < part[2]) level = 34 - Math.pow(depth, 1.4) * part[3];
    for (const [c, w] of breaks) {
      const d = Math.abs(x - c);
      if (d <= w) level = d === w ? 26 : 2 + d * 3;
    }
    const fade = Math.floor((x - FADE_START) / 1.5);
    if (x < intro.length) level = intro[x];
    if (fade >= 0 && x < 1048) level = fadeOut[fade] ?? 1;
    if (x > END_OF_AUDIO) level = 1;
    return [x, level, level];
  });
};

const BackingWave = () => {
  const d = outline(backing(), 36.5);
  return (
    <svg viewBox={`0 0 ${CLIP_WIDTH} 149`} width={CLIP_WIDTH} height="149" aria-hidden="true">
      {[39, 112].map((mid) => (
        <svg key={mid} x="0" y={mid - 37} width={CLIP_WIDTH} height="73" viewBox={`0 0 ${CLIP_WIDTH} 73`}>
          <path d={d} fill="#136494" stroke="#04121c" strokeWidth="1.500" strokeLinejoin="round" />
        </svg>
      ))}
      <path d="M60 75.500h1120" stroke="#04121c" strokeDasharray="6 5" strokeOpacity=".5" />
    </svg>
  );
};

const VoiceWave = ({ parts, mid, fill, line }: { parts: Peak[][]; mid: number; fill: string; line: string }) => (
  <svg viewBox={`0 0 ${CLIP_WIDTH} 149`} width={CLIP_WIDTH} height="149" aria-hidden="true">
    <path d={`M0 ${mid}H1213`} stroke={line} strokeWidth="1.500" />
    {parts.map((p) => (
      <path key={p[0][0]} d={outline(p, mid)} fill={fill} stroke={line} strokeWidth="1.200" />
    ))}
  </svg>
);

const bars = [1, 5, 9, 13, 17, 21, 25, 29, 33, 37, 41, 45, 49, 53, 57];

const barX = (bar: number) => 10 + Math.round(((bar - 1) / 4) * 86.25);

const ClipGrid = ({ className }: IconProps) => (
  <>
    {bars.slice(1).map((b) => (
      <i key={b} className={clsx("absolute inset-y-0 w-0.5", className)} style={{ left: barX(b) - 13 }} />
    ))}
  </>
);

const Arrangement = () => (
  <section className="flex min-w-0 flex-1 flex-col pt-[7px]">
    <div className="relative mr-[5px] h-[25px] overflow-hidden bg-[#1b1c20] text-[14px] font-bold leading-[30px] text-gray-100">
      {bars.map((b) => (
        <span key={b} className="absolute top-0 h-6 border-l border-gray-200 pl-1.5" style={{ left: barX(b) }}>
          {b}
        </span>
      ))}
      <Svg box="0 0 20 10" fill="#f3f3f3" className="absolute left-px top-0 h-2.5 w-5"><path d="M0 0h20L10 10z" /></Svg>
    </div>

    <div className="relative mt-[5px] min-h-0 flex-1 overflow-hidden">
      {bars.map((b) => (
        <i key={b} className="absolute inset-y-0 w-px bg-[#77797b]" style={{ left: barX(b) }} />
      ))}
      <div className="h-[25px] border-b-2 border-[#3b3e41]" />
      <div className="h-[153px] border-b-2 border-[#3b3e41] pl-3 pt-px">
        <div className="relative h-[150px] w-[1215px] overflow-hidden border border-[#1d76b0] bg-[#3fa7e8]">
          <ClipGrid className="bg-[#2791d2]" />
          <div className="relative"><BackingWave /></div>
        </div>
      </div>
      <div className="h-[153px] border-b-2 border-[#3b3e41] pl-3 pt-px">
        <div className="relative h-[150px] w-[1215px] border border-[#0c1d10] bg-[#152519] outline outline-1 -outline-offset-3 outline-[#48a85f]">
          <ClipGrid className="bg-[#204029]" />
          <div className="relative"><VoiceWave parts={vox1} mid={75} fill="#35df5e" line="#35df5e" /></div>
          <Svg box="0 0 10 10" fill="#dcf7e2" className="absolute left-0.5 top-[3px] size-2.5"><path d="M0 0h10L0 10z" /></Svg>
          <Svg box="0 0 10 10" fill="#dcf7e2" className="absolute right-0.5 top-[3px] size-2.5"><path d="M0 0h10v10z" /></Svg>
          <i className="absolute left-1/2 top-[3px] -ml-1.5 h-2 w-2.5 bg-[#dcf7e2]" />
          <i className="absolute bottom-0.5 left-0 size-2 bg-[#b0dcb8]" />
          <i className="absolute bottom-0.5 right-0.5 size-2 bg-[#b0dcb8]" />
          <i className="absolute right-0.5 top-[70px] size-2 bg-[#b0dcb8]" />
        </div>
      </div>
      <div className="h-[153px] border-b-2 border-[#3b3e41] pl-3 pt-px">
        <div className="relative h-[150px] w-[1215px] overflow-hidden border border-[#9a1caf] bg-[#ce42e5]">
          <ClipGrid className="bg-[#b526cd]" />
          <div className="relative"><VoiceWave parts={vox2} mid={75} fill="#80138f" line="#0d0410" /></div>
        </div>
      </div>
      <i className="absolute inset-y-0 left-[9px] w-1 border-x border-gray-200" />
      <Svg box="0 0 14 24" className="absolute left-[496px] top-[287px] h-6 w-3.5"><path d="M1 1v18l4-4 4 8 3-1-3.500-8H13z" fill="white" stroke="black" strokeWidth="1" /></Svg>
    </div>

    <div className="mb-1.5 mt-[3px] flex h-3.5 items-center text-gray-300">
      <div className="flex h-full min-w-0 flex-1 items-center rounded-sm bg-[#45484b]">
        <button type="button" aria-label="Scroll left" className="w-6 pl-1.5"><Svg className="size-2.5"><path d="M13 1L6 10l7 9" strokeWidth="4" /></Svg></button>
        <div className="h-[11px] w-[49%] rounded bg-gray-100" />
        <button type="button" aria-label="Scroll right" className="ml-auto mr-1"><Svg className="size-2.5"><path d="M7 1l7 9-7 9" strokeWidth="4" /></Svg></button>
      </div>
      <div className="flex w-[134px] items-center gap-1.5 pl-2 text-[#aaa]">
        <Triangle className="h-2 w-2.5" />
        <Svg className="ml-1.5 size-1.5"><path d="M0 10h20" strokeWidth="4" /></Svg>
        <input type="range" aria-label="Horizontal zoom" defaultValue={16} className="h-0.5 w-[57px] appearance-none bg-[#77797b] [&::-webkit-slider-thumb]:size-2 [&::-webkit-slider-thumb]:appearance-none [&::-webkit-slider-thumb]:rounded-full [&::-webkit-slider-thumb]:bg-[#bbb]" />
        <Svg className="ml-1.5 size-2"><path d="M0 10h20M10 0v20" strokeWidth="3" /></Svg>
      </div>
    </div>
  </section>
);

const vRange =
  "w-0.5 appearance-none bg-[#77797b] [writing-mode:vertical-lr] [&::-webkit-slider-thumb]:size-2 [&::-webkit-slider-thumb]:appearance-none [&::-webkit-slider-thumb]:rounded-full [&::-webkit-slider-thumb]:bg-[#bbb]";

const ZoomStrip = () => (
  <div className="mb-5 mr-1.5 mt-[5px] flex w-[15px] shrink-0 flex-col items-center text-gray-300">
    <button type="button" aria-label="Ruler format" className="flex h-[27px] w-3.5 items-center justify-center rounded-sm border border-[#7a7c7f] bg-[#5d5e61]"><Triangle className="h-2.5 w-2" /></button>
    <Svg className="mt-2.5 size-2.5 text-[#999]"><path d="M1 19L19 1" strokeWidth="3" /></Svg>
    <input type="range" aria-label="Waveform zoom" defaultValue={84} className={clsx(vRange, "mt-2.5 h-[60px]")} />
    <div className="mt-2.5 flex w-full flex-1 flex-col items-center rounded-sm bg-[#45484b] pt-1">
      <Svg className="size-2.5"><path d="M1 14l9-8 9 8" strokeWidth="4" /></Svg>
      <div className="mt-2 w-2.5 flex-1 rounded bg-gray-100" />
      <Svg className="my-2.5 size-2.5"><path d="M1 6l9 8 9-8" strokeWidth="4" /></Svg>
    </div>
    <Triangle className="mt-1 h-2 w-2.5" />
    <Svg className="mt-2 size-2"><path d="M0 10h20" strokeWidth="3" /></Svg>
    <input type="range" aria-label="Vertical zoom" defaultValue={26} className={clsx(vRange, "my-1 h-[67px]")} />
    <Svg className="mb-1 mt-2 size-2"><path d="M0 10h20M10 0v20" strokeWidth="3" /></Svg>
  </div>
);

/* ---------- transport ---------- */

const dark = "bg-[#1b1c20]";
const time = "flex-1 gap-[13px] pr-2 text-[17px]";

const TransportBar = () => (
  <footer className="flex h-[50px] shrink-0 items-center bg-[#24282b] pb-px pl-[5px] pr-1.5 text-gray-100">
    <Group className="w-[31px] bg-[#5d5e61]"><Cell label="Constrain delay"><Svg className="size-6"><circle cx="10" cy="10" r="5" /><path d="M10 6v4h3M4 2c-4 4-4 12 0 16M16 2c4 4 4 12 0 16" strokeWidth="1.600" /></Svg></Cell></Group>
    <Group className={clsx("ml-1.5 mr-0.5 w-[55px]", dark)}>
      <Cell label="Record mode"><i className="size-3.5 rounded-full bg-gray-100" /></Cell>
      <Cell label="Record modes"><Triangle /></Cell>
    </Group>
    <Dots />
    <Group className={clsx("ml-2 mr-0.5 w-[55px]", dark)}>
      <Cell label="Audio record mode"><WaveIcon className="h-5 w-6" /></Cell>
      <Cell label="Audio record modes"><Triangle /></Cell>
    </Group>
    <Dots />
    <Group className={clsx("ml-2 mr-0.5 w-[55px]", dark)}>
      <Cell label="MIDI record mode">
        <Svg className="size-5"><circle cx="10" cy="10" r="9.500" fill="currentColor" stroke="none" /><path d="M3 10h2M5 5l1.500 1.500M10 3v2M15 5l-1.500 1.500M17 10h-2M8 17h4" stroke="#1b1c20" /></Svg>
      </Cell>
      <Cell label="MIDI record modes"><Triangle /></Cell>
    </Group>
    <Dots />
    <Group className="ml-2 w-[47px] bg-[#5d5e61] text-[17px] text-gray-300"><Cell label="Auto quantize">AQ</Cell></Group>

    <Group className={clsx("ml-[123px] w-[187px]", dark)}>
      <Cell label="Go to left locator" className="max-w-[30px] border-r border-[#7a7c7f] bg-[#5d5e61]"><Svg className="size-4" fill="currentColor"><path d="M4 2h13L9 9v9H4z" /></Svg></Cell>
      <Position parts={["1.", "1.", "1.", "0"]} className={time} />
    </Group>
    <Group className={clsx("ml-[13px] w-[187px]", dark)}>
      <Cell label="Go to right locator" className="max-w-[30px] border-r border-[#7a7c7f] bg-[#5d5e61]"><Svg className="size-4" fill="currentColor"><path d="M3 2h13v16h-4V9z" /></Svg></Cell>
      <Position parts={["1.", "1.", "1.", "0"]} className={time} />
    </Group>
    <Group className="ml-[7px] mr-0.5 w-[94px] bg-[#5d5e61]">
      <Cell label="Lock punch points" className="bg-gray-100 text-black"><MdLock className="size-5" /></Cell>
      <Cell label="Punch in"><Svg className="size-4" fill="currentColor"><path d="M2 1h16l-8 10z" /><circle cx="10" cy="16" r="3" /></Svg></Cell>
      <Cell label="Punch out"><Svg className="size-4" fill="currentColor"><path d="M2 19h16L10 9z" /><circle cx="10" cy="4" r="3" /></Svg></Cell>
    </Group>
    <Dots />
    <div className="ml-[7px] mr-[3px] flex h-10 w-[250px] shrink-0 overflow-hidden rounded-[4px] border-2 border-[#c9c9c9] bg-[#717274]">
      <Cell label="Cycle"><Svg><path d="M8 5h4c8 0 7 11 0 11H4" strokeWidth="2.200" /><path d="M0 17l8-8v8z" fill="currentColor" stroke="none" /></Svg></Cell>
      <Cell label="Stop" className="bg-[#e4eaf3] text-black"><i className="size-4 border-2 border-black" /></Cell>
      <Cell label="Start"><Svg><path d="M4 2l13 8-13 8z" /></Svg></Cell>
      <Cell label="Record"><Svg><circle cx="10" cy="10" r="7.500" /></Svg></Cell>
    </div>
    <Dots />
    <Group className="ml-[7px] w-12 bg-[#5d5e61] text-[#909193]"><Cell label="Pre-roll"><Svg fill="currentColor"><circle cx="7" cy="10" r="4" /><path d="M10 1a9 9 0 0 1 0 18c4-4 6-11 0-18z" /></Svg></Cell></Group>
    <Group className={clsx("ml-[7px] mr-0.5 w-[187px]", dark)}>
      <Cell label="Primary time" className="max-w-[30px] border-r border-[#7a7c7f]"><NoteIcon className="size-6" /></Cell>
      <Position parts={["1.", "1.", "1.", "0"]} className={time} />
    </Group>
    <Dots />
    <Group className={clsx("ml-2 mr-0.5 w-[133px]", dark)}>
      <Cell label="Tempo track" className="max-w-[31px] bg-gray-100 text-black"><NoteIcon className="size-5" /><Svg box="0 0 8 20" className="-ml-1 h-5 w-2" fill="currentColor"><path d="M4 0l4 6H5v8h3l-4 6-4-6h3V6H0z" /></Svg></Cell>
      <input aria-label="Tempo" defaultValue="79.000" className="w-0 flex-1 bg-transparent pr-3 text-right text-[15px] outline-none" />
      <Svg box="0 0 10 20" fill="currentColor" className="mr-2 h-5 w-2.5"><path d="M5 1l5 7H0zM5 19l5-7H0z" /></Svg>
    </Group>
    <Dots />
    <Group className="ml-auto mr-0.5 w-[62px] bg-[#5d5e61]">
      <Cell label="Metronome"><Svg><path d="M6 3h6l4 15H3z" fill="currentColor" stroke="none" /><path d="M9 13l7-12" stroke="#5d5e61" strokeWidth="3" /><path d="M8 14l6-11" strokeWidth="1.500" /></Svg></Cell>
      <Cell label="Metronome setup"><EditIcon /></Cell>
    </Group>
    <Dots />
    <Group className={clsx("ml-2 mr-0.5 w-[111px]", dark)}>
      <i className="h-full w-8 border-r border-[#5b5e61]" />
      <i className="mb-px ml-4 h-0.5 w-[9px] self-end bg-[#14b4f0]" />
      <i className="mb-px ml-px h-0.5 w-[9px] self-end bg-[#14b4f0]" />
    </Group>
    <Dots />
    <Group className={clsx("ml-1.5 w-[23px]", dark)}><Cell label="Set up transport"><Gear /></Cell></Group>
  </footer>
);

export default function App() {
  return (
    <div className="flex h-screen min-h-[900px] flex-col overflow-hidden bg-[#070707] font-['Open_Sans','Noto_Sans',sans-serif]">
      <MenuBar />
      <Toolbar />
      <InfoLine />
      <main className="flex min-h-0 flex-1 gap-[5px] p-[5px]">
        <Inspector />
        <div className="relative flex min-w-0 flex-1 rounded-lg border-2 border-[#c8c8ca] bg-[#24282b]">
          <TrackList />
          <div className="mb-1.5 mt-[5px] flex w-1 shrink-0 flex-col justify-center gap-0.5 bg-[#6d6f72]">
            <i className="h-1.5 bg-gray-200" />
            <i className="h-1.5 bg-gray-200" />
            <i className="h-1.5 bg-gray-200" />
            <i className="h-1.5 bg-gray-200" />
          </div>
          <Arrangement />
          <ZoomStrip />
          <div className="pointer-events-none absolute left-[368px] top-[208px] h-[168px] w-[1243px] border-4 border-[#fe0000]" />
        </div>
      </main>
      <TransportBar />
      <div className="h-0.5 shrink-0 border-b border-[#8a8385] bg-black" />
    </div>
  );
}
